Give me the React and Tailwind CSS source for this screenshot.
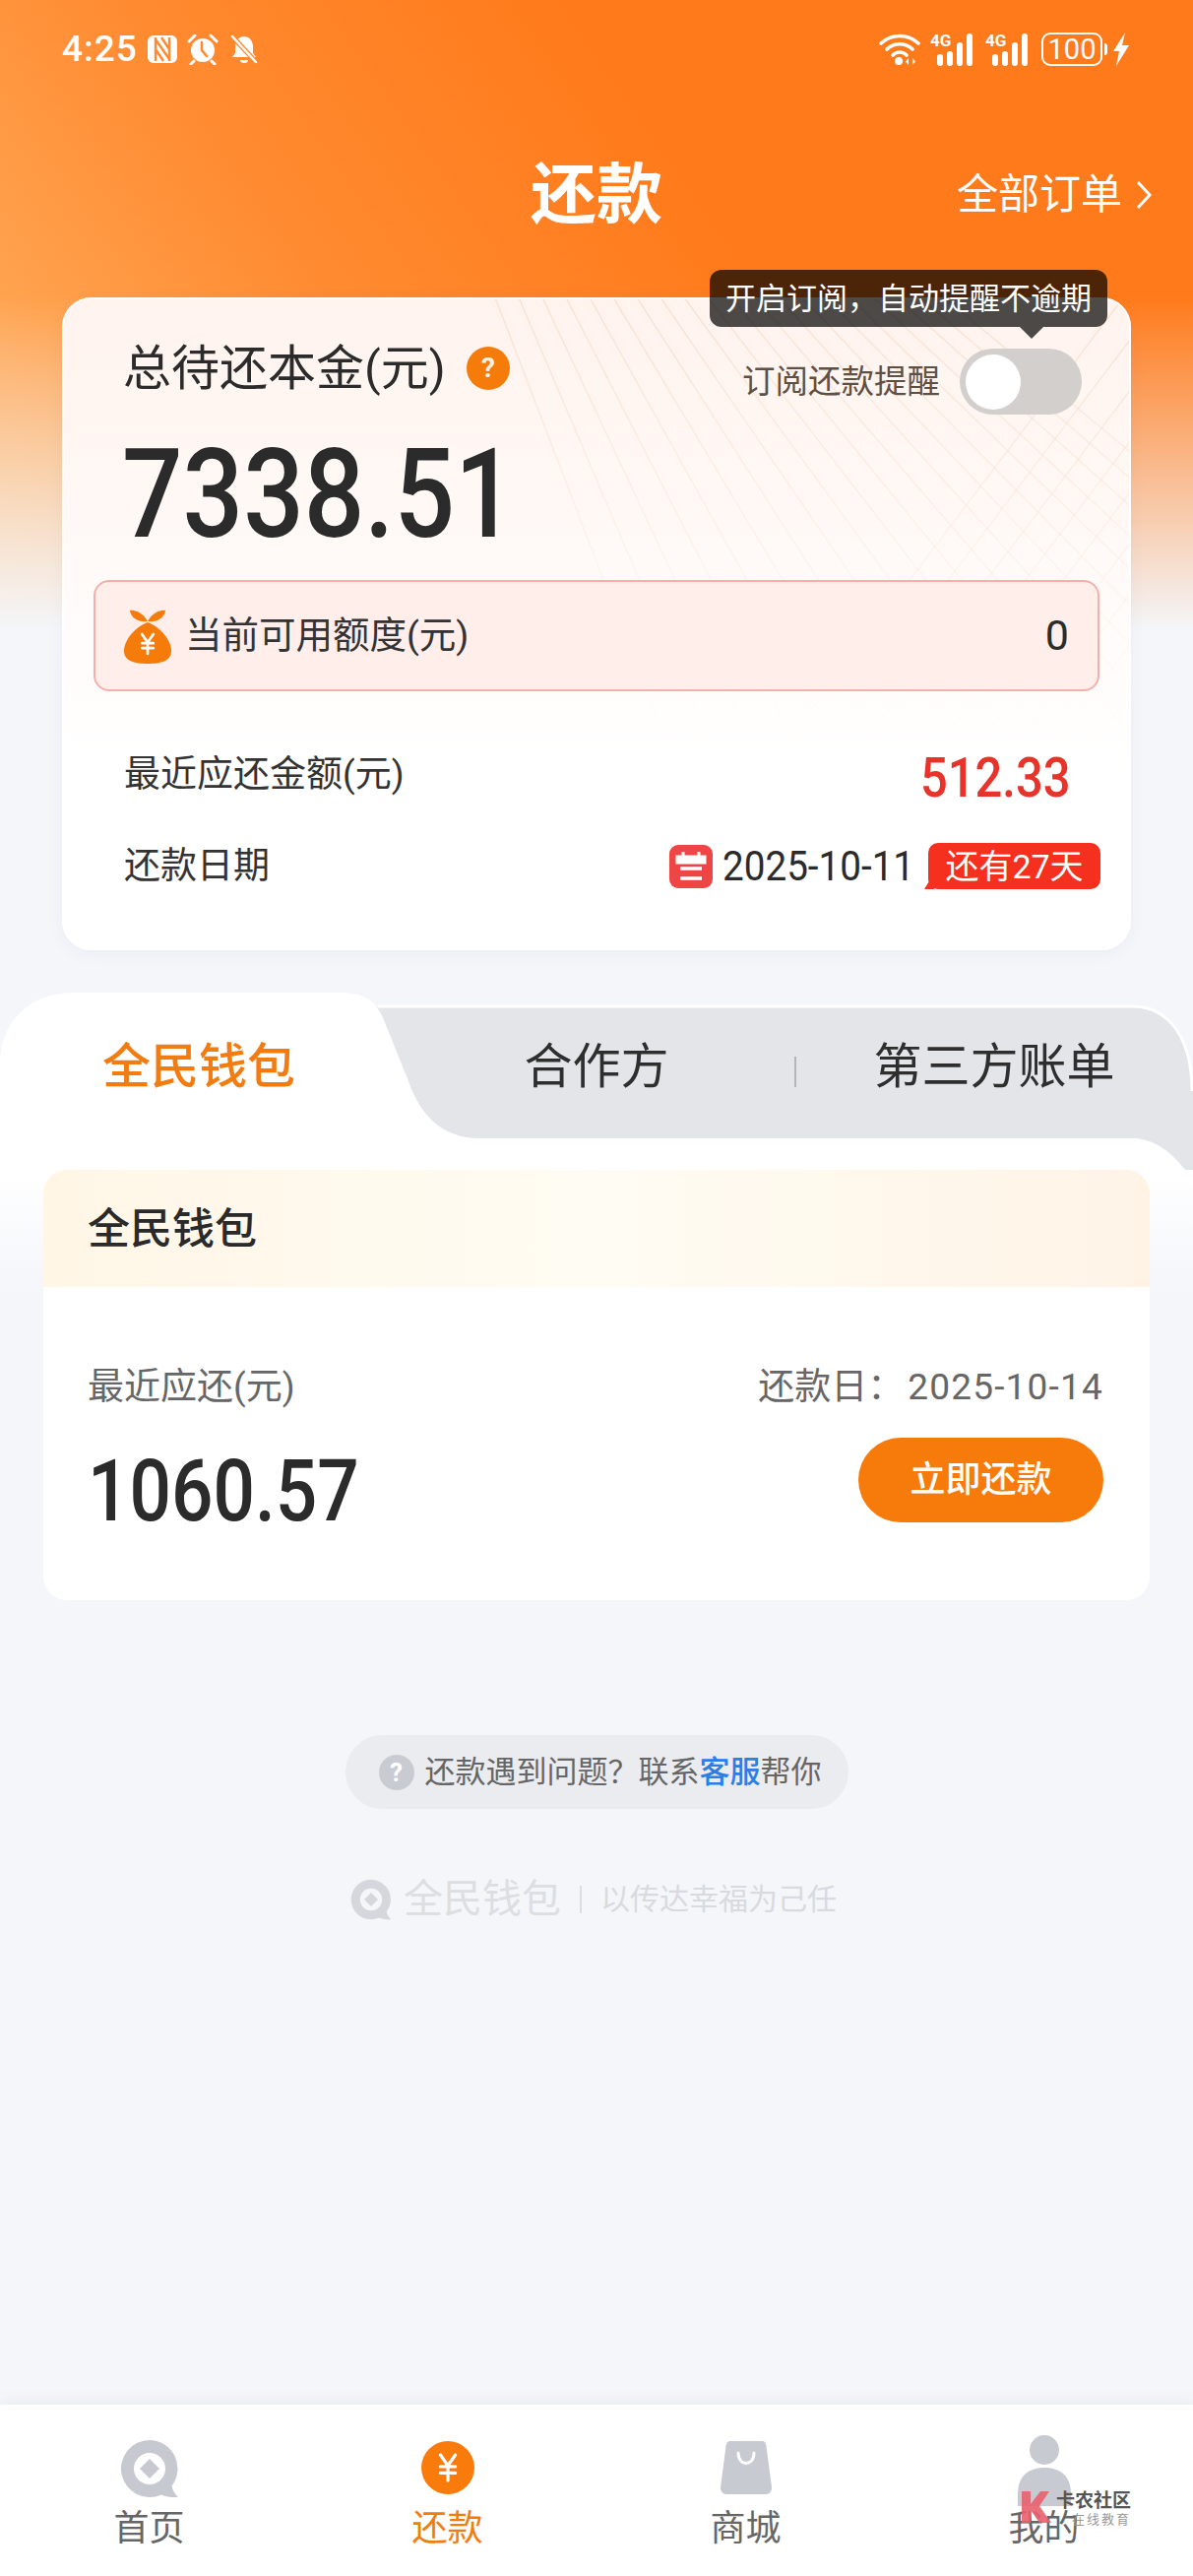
const font = "font-['Roboto','Noto_Sans_CJK_SC',sans-serif]";

const StatusIcons = {
    Nfc: () => (
        <svg width="30" height="28" viewBox="0 0 30 28" className="ml-[10px]">
            <rect width="30" height="28" rx="6" fill="#fff" />
            <path d="M8 2v24M22 2v24M8 4l14 20M14 2l8 12M8 14l8 12" stroke="#ff8a33" strokeWidth="2.4" fill="none" />
        </svg>
    ),
    Alarm: () => (
        <svg width="32" height="32" viewBox="0 0 32 32" className="ml-[10px]">
            <circle cx="16" cy="17" r="12" fill="#fff" />
            <path d="M2 8l6-6M30 8l-6-6M7 28l-3 3M25 28l3 3" stroke="#fff" strokeWidth="3" strokeLinecap="round" />
            <path d="M15 9v8l5 6" stroke="#ff8a33" strokeWidth="2.6" fill="none" strokeLinecap="round" />
        </svg>
    ),
    BellOff: () => (
        <svg width="30" height="30" viewBox="0 0 30 30" className="ml-[11px]">
            <path d="M15 2c6 0 9 5 9 11v6l3 4H3l3-4v-6c0-6 3-11 9-11z" fill="#fff" />
            <path d="M11 26a4 3 0 0 0 8 0z" fill="#fff" />
            <path d="M3 2l24 26" stroke="#ff8a33" strokeWidth="5" />
            <path d="M3 2l24 26" stroke="#fff" strokeWidth="2.4" strokeLinecap="round" />
        </svg>
    ),
    Wifi: () => (
        <svg width="42" height="34" viewBox="0 0 42 34">
            <path d="M2 11c11-10 27-10 38 0M8 17c7-7 19-7 26 0M14 23c4-4 10-4 14 0" stroke="#fff" strokeWidth="3.6" fill="none" strokeLinecap="round" />
            <circle cx="20" cy="29" r="4" fill="#fff" />
            <path d="M30 26v7l-3-3.500zM34 26v7l3-3.500z" fill="#fff" />
        </svg>
    ),
    Bolt: () => (
        <svg width="18" height="34" viewBox="0 0 18 34" className="ml-[5px]">
            <path d="M13 0L1 19h6L4 34 17 13h-7z" fill="#fff" />
        </svg>
    ),
};

const Signal = () => (
    <div className="relative h-[34px] w-[46px]">
        <span className="absolute left-0 top-0 text-[17px] font-bold leading-[17px] text-white">4G</span>
        <svg width="39" height="34" viewBox="0 0 39 34" className="absolute right-0 top-0">
            <rect x="0" y="22" width="6" height="12" rx="3" fill="#fff" />
            <rect x="10" y="19" width="6" height="15" rx="3" fill="#fff" />
            <rect x="20" y="10" width="6" height="24" rx="3" fill="#fff" />
            <rect x="30" y="1" width="6" height="33" rx="3" fill="#fff" />
        </svg>
    </div>
);

const Yuan = ({ className, color = "#fff", strokeWidth = 3 }) => (
    <svg viewBox="0 0 24 28" className={className}>
        <path d="M5 2l7 10 7-10M12 12v14M5 13h14M5 19h14" stroke={color} strokeWidth={strokeWidth} fill="none" strokeLinecap="round" />
    </svg>
);

const CardLines = () => {
    const left = Array.from({ length: 20 }, (_, i) => 440 + i * 24);
    const right = Array.from({ length: 15 }, (_, i) => i * 30);
    return (
        <svg width="1086" height="663" viewBox="0 0 1086 663" className="absolute left-0 top-0 rounded-[30px]">
            <defs>
                <linearGradient id="fade" gradientUnits="userSpaceOnUse" x1="0" y1="0" x2="0" y2="470">
                    <stop offset="0" stopColor="#f5d3bb" stopOpacity="0.55" />
                    <stop offset="1" stopColor="#fbe5d4" stopOpacity="0" />
                </linearGradient>
            </defs>
            {left.map((x) => {
                const t = (470 + 555) / 555;
                return <line key={x} x1={x} y1="0" x2={227 + (x - 227) * t} y2="470" stroke="url(#fade)" strokeWidth="1.5" />;
            })}
            {right.map((d) => (
                <line key={d} x1={1086 + d} y1={-10 + d * 0.4} x2={700 + d} y2={500 + d * 0.4} stroke="url(#fade)" strokeWidth="1.5" />
            ))}
        </svg>
    );
};

const TabShape = () => (
    <svg width="1212" height="180" viewBox="0 0 1212 180" className="absolute left-0 top-0">
        <path d="M340 15H1150C1190 15 1212 50 1212 100V180H1204C1192 165 1175 148 1150 148H400Z" fill="#e4e5e8" />
        <path d="M384 14H1150C1190 14 1211 50 1211 100" fill="none" stroke="#fff" strokeWidth="3" />
        <path d="M0 180V72C0 30 30 0 75 0H345C370 0 382 8 390 28L415 90C427 125 450 148 487 148H1150C1175 148 1192 165 1204 180Z" fill="#fff" />
    </svg>
);

const LogoMark = ({ size, fill = "#c7c9d0", inner = "#fff" }) => (
    <svg width={size} height={size} viewBox="0 0 60 60">
        <path d="M30 1a29 29 0 1 0 12 55.4c5 2.4 11 3 17 2.6-4-4-6-8-6.4-11.500A29 29 0 0 0 30 1z" fill={fill} />
        <circle cx="30" cy="30" r="16" fill={inner} />
        <path d="M30 20l10 10-10 10-10-10z" fill={fill} />
    </svg>
);

const NavItem = ({ label, active, children }) => (
    <div className="flex flex-1 flex-col items-center">
        <div className="flex h-[71px] items-start justify-center">{children}</div>
        <span className={`text-[36px] leading-[40px] ${active ? "text-[#f27c10]" : "text-[#666666]"}`}>{label}</span>
    </div>
);

export default function App() {
    return (
        <div className={`${font} relative flex h-[2616px] w-[1212px] flex-col overflow-hidden bg-[#f4f6fa] bg-[linear-gradient(to_bottom,rgba(244,246,250,0)_300px,#f4f6fa_640px),linear-gradient(55deg,#ffb465_0%,#ff8a30_35%,#ff7a1a_62%)] bg-size-[100%_640px] bg-no-repeat`}>
            {/* status bar */}
            <div className="flex h-[100px] items-center justify-between pl-[63px] pr-[64px] text-white">
                <div className="flex items-center">
                    <span className="text-[37px] font-medium tracking-[1px]">4:25</span>
                    <StatusIcons.Nfc />
                    <StatusIcons.Alarm />
                    <StatusIcons.BellOff />
                </div>
                <div className="flex items-center">
                    <StatusIcons.Wifi />
                    <div className="ml-[10px]"><Signal /></div>
                    <div className="ml-[10px]"><Signal /></div>
                    <div className="ml-[11px] flex h-[34px] w-[62px] items-center justify-center rounded-[9px] border-[2.5px] border-white text-[29px] leading-none">100</div>
                    <div className="ml-[2px] h-[12px] w-[3px] rounded-r-full bg-white" />
                    <StatusIcons.Bolt />
                </div>
            </div>

            {/* header */}
            <div className="grid h-[202px] grid-cols-3 items-center px-[41px] pb-[6px] text-white">
                <div />
                <h1 className="text-center text-[67px] font-bold leading-none">还款</h1>
                <div className="flex items-center justify-end">
                    <span className="text-[42px] leading-none">全部订单</span>
                    <svg width="17" height="32" viewBox="0 0 17 32" className="ml-[14px]">
                        <path d="M2 3l12 13L2 29" stroke="#fff" strokeWidth="3" fill="none" />
                    </svg>
                </div>
            </div>

            {/* summary card */}
            <div className="relative mx-[63px] flex h-[663px] flex-col rounded-[30px] bg-[linear-gradient(to_bottom,#fff3ee,#ffffff_72%)] shadow-[0_4px_16px_rgba(90,100,130,0.06)]">
                <CardLines />
                <div className="absolute inset-0 rounded-[30px] border-2 border-white/80" />

                <div className="absolute right-[24px] top-[-28px] z-10 flex h-[58px] w-[404px] items-center justify-center rounded-[12px] bg-black/70 text-[31px] leading-none text-white">
                    开启订阅，自动提醒不逾期
                    <div className="absolute left-[315px] top-[58px] h-0 w-0 border-x-[12px] border-t-[12px] border-x-transparent border-t-black/70" />
                </div>

                <div className="relative flex items-start justify-between pl-[62px] pr-[50px] pt-[46px]">
                    <div className="flex h-[52px] items-center">
                        <span className="text-[49px] leading-none text-[#2b2b2b]">总待还本金(元)</span>
                        <span className="ml-[21px] flex h-[44px] w-[44px] items-center justify-center rounded-full bg-[#f57c0b] text-[28px] font-bold leading-none text-white/90">?</span>
                    </div>
                    <div className="mt-[6px] flex items-center">
                        <span className="text-[33.5px] leading-none text-[#5f5044]">订阅还款提醒</span>
                        <div className="ml-[20px] flex h-[67px] w-[124px] items-center rounded-full bg-[#d2cfcd] pl-[6px]">
                            <div className="h-[56px] w-[56px] rounded-full bg-white" />
                        </div>
                    </div>
                </div>

                <div className="relative mt-[36px] h-[90px] pl-[61px]">
                    <span className="inline-block origin-left scale-x-[0.86] text-[126px] font-medium leading-[90px] text-[#2b2b2b]">7338.51</span>
                </div>

                <div className="relative mx-[32px] mt-[42px] flex h-[113px] items-center justify-between rounded-[16px] border-2 border-[#f3b0aa] bg-[#ffeeea] pl-[28px] pr-[29px]">
                    <div className="flex items-center">
                        <div className="relative h-[56px] w-[50px]">
                            <svg width="50" height="56" viewBox="0 0 50 56" className="absolute left-0 top-0">
                                <path d="M25 14C12 19 1 32 1 43c0 10 10 13 24 13s24-3 24-13C49 32 38 19 25 14z" fill="#f57c0b" />
                                <path d="M25 13C20 4 12 1 7 2c1 8 9 12 18 11zM25 13C30 4 38 1 43 2c-1 8-9 12-18 11z" fill="#f57c0b" />
                            </svg>
                            <Yuan className="absolute left-[15px] top-[24px] h-[24px] w-[20px]" strokeWidth={3.2} />
                        </div>
                        <span className="ml-[13px] text-[37.5px] leading-none text-[#333333]">当前可用额度(元)</span>
                    </div>
                    <span className="text-[43px] leading-none text-[#2b2b2b]">0</span>
                </div>

                <div className="relative mt-[60px] flex h-[48px] items-center justify-between pl-[63px] pr-[61px]">
                    <span className="text-[37px] leading-none text-[#333333]">最近应还金额(元)</span>
                    <span className="mt-[8px] inline-block origin-right scale-x-[0.89] text-[55px] font-medium leading-none text-[#e8332a]">512.33</span>
                </div>

                <div className="relative mt-[46px] flex h-[47px] items-center justify-between pl-[63px] pr-[31px]">
                    <span className="text-[37px] leading-none text-[#333333]">还款日期</span>
                    <div className="flex items-center">
                        <svg width="44" height="44" viewBox="0 0 44 44">
                            <rect width="44" height="44" rx="9" fill="#ee4545" />
                            <path d="M8 12h28v6H8zM14 7v6M30 7v6" stroke="#fff" strokeWidth="3" fill="#fff" />
                            <path d="M11 24h22M11 34h22" stroke="#fff" strokeWidth="3.6" />
                        </svg>
                        <span className="ml-[10px] inline-block w-[194px] origin-left scale-x-[0.92] whitespace-nowrap text-[42px] leading-none text-[#2b2b2b]">2025-10-11</span>
                        <div className="relative ml-[15px] flex h-[47px] w-[175px] items-center justify-center rounded-[10px] bg-[#f5301f] text-[34px] leading-none text-white">
                            还有27天
                            <div className="absolute bottom-0 left-[-4px] h-[16px] w-[10px] bg-[#f5301f] [clip-path:polygon(100%_0,100%_100%,0_100%)]" />
                        </div>
                    </div>
                </div>
            </div>

            {/* tabs */}
            <div className="relative mt-[43px] h-[180px]">
                <TabShape />
                <div className="relative grid h-[150px] grid-cols-3 items-center text-center text-[49px] leading-none">
                    <span className="font-medium text-[#f27c10]">全民钱包</span>
                    <span className="text-[#2e2e2e]">合作方</span>
                    <span className="text-[#2e2e2e]">第三方账单</span>
                    <div className="absolute left-[807px] top-[65px] h-[31px] w-[2px] bg-[#b5b5b5]" />
                </div>
            </div>

            {/* wallet list */}
            <div className="bg-[linear-gradient(to_bottom,#ffffff,#f4f6fa_120px)] px-[44px]">
                <div className="overflow-hidden rounded-[24px] bg-white">
                    <div className="flex h-[119px] items-center bg-[linear-gradient(to_right,#fff6e6,#fffcf3_50%,#fff3e6)] pl-[45px] pt-[2px]">
                        <span className="text-[43px] font-medium leading-none text-[#2a2a2a]">全民钱包</span>
                    </div>
                    <div className="flex h-[318px] items-start justify-between pl-[45px] pr-[47px]">
                        <div className="flex flex-col">
                            <span className="mt-[82px] text-[37px] leading-[40px] text-[#666666]">最近应还(元)</span>
                            <span className="mt-[50px] inline-block origin-left scale-x-[0.85] text-[88px] font-medium leading-[70px] text-[#2b2b2b]">1060.57</span>
                        </div>
                        <div className="flex flex-col items-end">
                            <span className="mt-[82px] whitespace-nowrap text-[37px] leading-[40px] text-[#666666]">
                                还款日：<span className="ml-[4px] inline-block tracking-[1.200px]">2025-10-14</span>
                            </span>
                            <div className="mt-[31px] flex h-[86px] w-[249px] items-center justify-center rounded-full bg-[#f77b0a] text-[36px] font-medium leading-none text-white">立即还款</div>
                        </div>
                    </div>
                </div>
            </div>

            {/* help */}
            <div className="mt-[137px] flex h-[75px] w-[511px] items-center self-center rounded-full bg-[#ebecf0] pl-[34px]">
                <span className="flex h-[36px] w-[36px] items-center justify-center rounded-full bg-[#c8cbd1] text-[26px] font-bold leading-none text-white">?</span>
                <span className="ml-[11px] whitespace-nowrap text-[31px] leading-none text-[#666666]">
                    还款遇到问题？联系<span className="font-medium text-[#2a7fe6]">客服</span>帮你
                </span>
            </div>

            <div className="mt-[71px] flex h-[42px] w-[500px] items-center self-center">
                <LogoMark size={42} fill="#d5d7dc" inner="#f4f6fa" />
                <span className="ml-[12px] whitespace-nowrap text-[40px] leading-none text-[#dcdee2]">全民钱包</span>
                <div className="ml-[19px] h-[28px] w-[2px] bg-[#dcdee2]" />
                <span className="ml-[19px] whitespace-nowrap text-[30px] leading-none text-[#d8dadf]">以传达幸福为己任</span>
            </div>

            {/* bottom nav */}
            <div className="relative mt-auto flex h-[174px] bg-white pt-[35px] shadow-[0_-2px_14px_rgba(80,90,110,0.08)]">
                <NavItem label="首页"><LogoMark size={60} /></NavItem>
                <NavItem label="还款" active>
                    <div className="mt-[2px] flex h-[54px] w-[54px] items-center justify-center rounded-full bg-[#f97b0c]">
                        <Yuan className="h-[32px] w-[26px]" strokeWidth={3} />
                    </div>
                </NavItem>
                <NavItem label="商城">
                    <svg width="52" height="54" viewBox="0 0 52 54" className="mt-[2px]">
                        <path d="M10 0h32c3 0 4 2 4.500 5L52 47c0 4-2 7-6 7H6c-4 0-6-3-6-7L5.500 5C6 2 7 0 10 0z" fill="#c8cad1" />
                        <path d="M18 12c0 14 16 14 16 0" stroke="#fff" strokeWidth="3" fill="none" strokeLinecap="round" />
                    </svg>
                </NavItem>
                <NavItem label="我的">
                    <svg width="54" height="72" viewBox="0 0 54 72" className="-mt-[4px]">
                        <circle cx="27" cy="15" r="15" fill="#c8cad1" />
                        <path d="M0 60C0 42 10 33 27 33s27 9 27 27v12H0z" fill="#c8cad1" />
                    </svg>
                </NavItem>

                {/* forum watermark */}
                <div className="absolute left-[1036px] top-[88px] flex items-start">
                    <svg width="34" height="32" viewBox="0 0 34 32">
                        <path d="M2 0h9v13l10-13h9L20 15l12 17H20l-9-13v13H2z" fill="#ea5f6e" opacity="0.9" />
                    </svg>
                    <div className="ml-[3px] flex flex-col items-end">
                        <span className="text-[19px] font-bold leading-[19px] text-[#555555]">卡农社区</span>
                        <span className="mt-[3px] text-[13px] leading-[13px] tracking-[2px] text-[#999999]">在线教育</span>
                    </div>
                </div>
            </div>
        </div>
    );
}
